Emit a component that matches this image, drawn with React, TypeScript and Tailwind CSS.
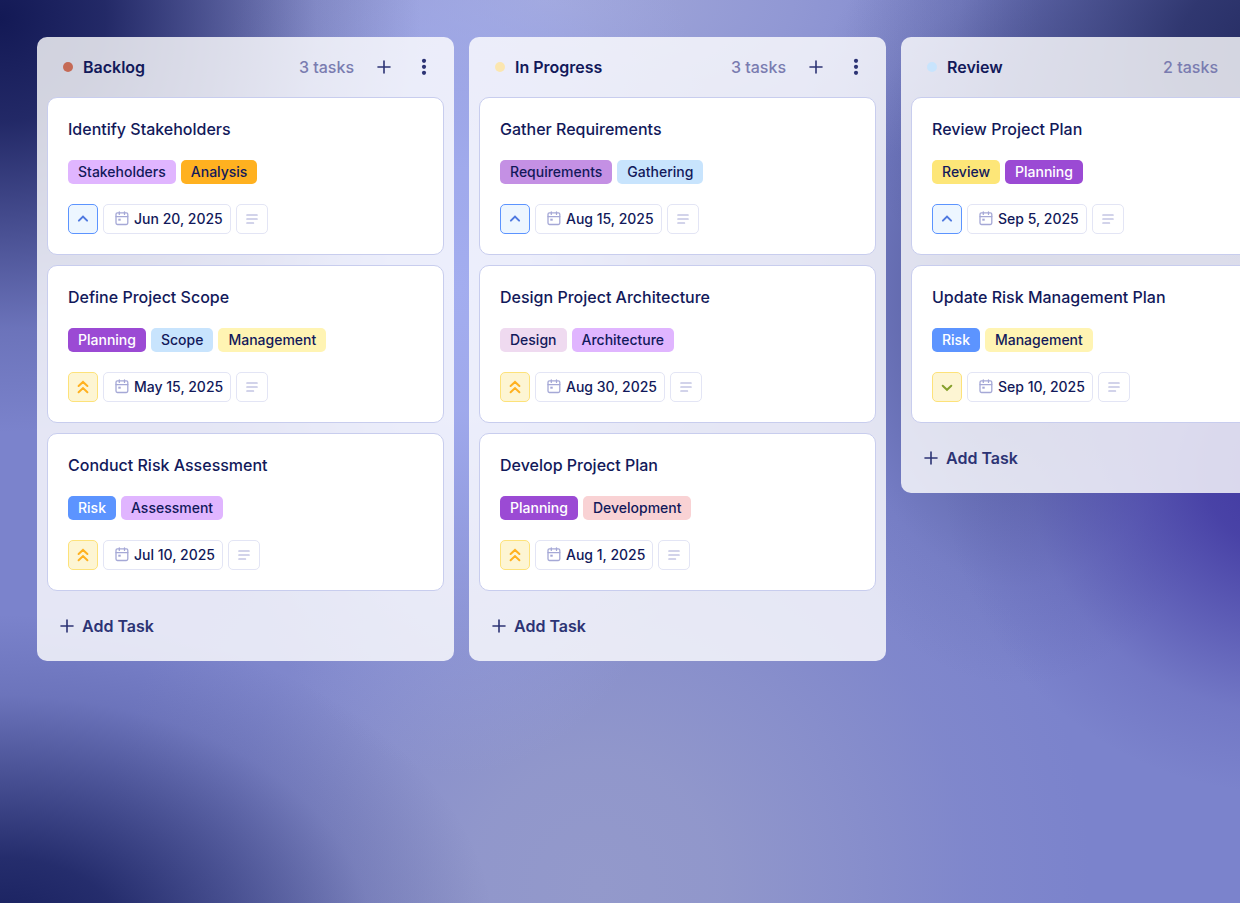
import React from 'react';

type Priority = 'medium' | 'high' | 'low';

type Tag = {
  name: string;
  color: string;
};

type Task = {
  title: string;
  tags: Tag[];
  priority: Priority;
  date: string;
};

type Column = {
  name: string;
  dot: string;
  tasks: Task[];
};

const tag = {
  stakeholders: { name: "Stakeholders", color: "bg-[#e0b5ff]" },
  analysis: { name: "Analysis", color: "bg-[#ffb120]" },
  planning: { name: "Planning", color: "bg-[#9b4ad4] text-white" },
  scope: { name: "Scope", color: "bg-[#c8e4fd]" },
  management: { name: "Management", color: "bg-[#fff4b3]" },
  risk: { name: "Risk", color: "bg-[#5c94ff] text-white" },
  assessment: { name: "Assessment", color: "bg-[#e0b5ff]" },
  requirements: { name: "Requirements", color: "bg-[#c490e4]" },
  gathering: { name: "Gathering", color: "bg-[#c8e4fd]" },
  design: { name: "Design", color: "bg-[#efdaf0]" },
  architecture: { name: "Architecture", color: "bg-[#e0b5ff]" },
  development: { name: "Development", color: "bg-[#f9d2d4]" },
  review: { name: "Review", color: "bg-[#fde678]" },
};

const columns: Column[] = [
  {
    name: "Backlog",
    dot: "bg-[#c56a56]",
    tasks: [
      { title: "Identify Stakeholders", tags: [tag.stakeholders, tag.analysis], priority: "medium", date: "Jun 20, 2025" },
      { title: "Define Project Scope", tags: [tag.planning, tag.scope, tag.management], priority: "high", date: "May 15, 2025" },
      { title: "Conduct Risk Assessment", tags: [tag.risk, tag.assessment], priority: "high", date: "Jul 10, 2025" },
    ],
  },
  {
    name: "In Progress",
    dot: "bg-[#fbe6b0]",
    tasks: [
      { title: "Gather Requirements", tags: [tag.requirements, tag.gathering], priority: "medium", date: "Aug 15, 2025" },
      { title: "Design Project Architecture", tags: [tag.design, tag.architecture], priority: "high", date: "Aug 30, 2025" },
      { title: "Develop Project Plan", tags: [tag.planning, tag.development], priority: "high", date: "Aug 1, 2025" },
    ],
  },
  {
    name: "Review",
    dot: "bg-[#c8e4fd]",
    tasks: [
      { title: "Review Project Plan", tags: [tag.review, tag.planning], priority: "medium", date: "Sep 5, 2025" },
      { title: "Update Risk Management Plan", tags: [tag.risk, tag.management], priority: "low", date: "Sep 10, 2025" },
    ],
  },
];

const priorities = {
  medium: { label: "Medium priority", box: "border-[#5c94ff] bg-[#edf6ff] text-[#4f79e0]", path: "M2.9 8.6 7 4.6l4.1 4" },
  high: { label: "High priority", box: "border-[#fde27a] bg-[#fdf5d3] text-[#ffb120]", path: "M2.6 6 7 1.9 11.4 6M2.6 12.2 7 8.1l4.4 4.1" },
  low: { label: "Low priority", box: "border-[#fde27a] bg-[#fdf5d3] text-[#86a02c]", path: "M2.7 5.8 7 9.8l4.3-4" },
};

const PlusIcon = () => (
  <svg className="size-4" viewBox="0 0 16 16" fill="none" stroke="currentColor" strokeWidth="1.6" strokeLinecap="round" aria-hidden="true">
    <path d="M8 2v12M2 8h12" />
  </svg>
);

const DotsIcon = () => (
  <svg className="size-[18px]" viewBox="0 0 18 18" fill="currentColor" aria-hidden="true">
    <circle cx="9" cy="2.8" r="2.1" />
    <circle cx="9" cy="8.8" r="2.1" />
    <circle cx="9" cy="14.8" r="2.1" />
  </svg>
);

const CalendarIcon = () => (
  <svg className="h-4 w-[14px] text-[#a5a8d6]" viewBox="0 0 14 16" fill="none" stroke="currentColor" strokeWidth="1.3" strokeLinecap="round" aria-hidden="true">
    <rect x="1" y="1.9" width="11.8" height="11.6" rx="1.4" />
    <path d="M1 5.6h11.8M4.3.8v2.6M9.5.8v2.6" />
    <rect x="3.3" y="7.7" width="2.4" height="2" fill="currentColor" stroke="none" />
  </svg>
);

const LinesIcon = () => (
  <svg className="h-[10px] w-3" viewBox="0 0 12 10" fill="none" stroke="currentColor" strokeWidth="1.2" strokeLinecap="round" aria-hidden="true">
    <path d="M.8 1h10.4M.8 5h10.4M.8 9h6.8" />
  </svg>
);

const TaskCard = ({ task }: { task: Task }) => {
  const priority = priorities[task.priority];

  return (
    <article className="rounded-[10px] border border-[#c8cdee] bg-white p-5">
      <h3 className="text-base leading-[22px] font-medium">{task.title}</h3>

      {/* Tags */}
      <ul className="mt-5 flex gap-[5px]">
        {task.tags.map((item) => (
          <li key={item.name} className={`h-6 rounded-[5px] px-[10px] text-sm leading-6 font-medium ${item.color}`}>
            {item.name}
          </li>
        ))}
      </ul>

      {/* Priority, due date, description */}
      <div className="mt-5 flex gap-[5px]">
        <button type="button" aria-label={priority.label} className={`flex size-[30px] items-center justify-center rounded-[5px] border ${priority.box}`}>
          <svg className="size-[14px]" viewBox="0 0 14 14" fill="none" stroke="currentColor" strokeWidth="2" strokeLinecap="round" aria-hidden="true">
            <path d={priority.path} />
          </svg>
        </button>
        <button type="button" className="flex h-[30px] items-center gap-[5px] rounded-[5px] border border-[#e3e5f5] pr-[7px] pl-[11px] text-sm font-medium whitespace-nowrap">
          <CalendarIcon />
          {task.date}
        </button>
        <button type="button" aria-label="Description" className="flex h-[30px] w-8 items-center justify-center rounded-[5px] border border-[#e3e5f5] text-[#a5a8d6]">
          <LinesIcon />
        </button>
      </div>
    </article>
  );
};

const BoardColumn = ({ column }: { column: Column }) => (
  <section className="w-[417px] shrink-0 rounded-[10px] bg-white/80 px-[10px] pb-[15px]">
    <header className="flex h-[60px] items-center pr-[5px] pl-4 text-base">
      <span className={`size-[10px] rounded-full ${column.dot}`} />
      <h2 className="ml-[10px] font-semibold">{column.name}</h2>
      <span className="ml-auto font-medium text-[#7a7cb0]">{column.tasks.length} tasks</span>
      <button type="button" aria-label="Add task" className="ml-[15px] flex size-[30px] items-center justify-center text-[#2c3374]">
        <PlusIcon />
      </button>
      <button type="button" aria-label="Column menu" className="ml-[10px] flex size-[30px] items-center justify-center text-[#2c3374]">
        <DotsIcon />
      </button>
    </header>

    <div className="flex flex-col gap-[10px]">
      {column.tasks.map((task) => (
        <TaskCard key={task.title} task={task} />
      ))}
    </div>

    <button type="button" className="mt-[15px] flex h-10 items-center gap-[7px] px-3 text-base font-semibold text-[#2c3374]">
      <PlusIcon />
      Add Task
    </button>
  </section>
);

const App = () => {
  return (
    <main className="min-h-screen bg-[#7b83cc] bg-[radial-gradient(ellipse_34%_46%_at_0%_2%,#131955_0%,#131955d9_25%,#13195580_50%,#13195526_75%,#13195500_100%),radial-gradient(ellipse_40%_36%_at_0%_104%,#161e5c_0%,#161e5cd9_25%,#161e5c80_50%,#161e5c26_75%,#161e5c00_100%),radial-gradient(ellipse_36%_40%_at_104%_6%,#232a60_0%,#232a60d9_25%,#232a6080_50%,#232a6026_75%,#232a6000_100%),radial-gradient(ellipse_28%_36%_at_104%_52%,#4037a0_0%,#4037a0d9_25%,#4037a080_50%,#4037a026_75%,#4037a000_100%),radial-gradient(ellipse_20%_44%_at_82%_32%,#404784b3_0%,#40478499_25%,#40478459_50%,#4047841a_75%,#40478400_100%),radial-gradient(ellipse_22%_54%_at_37%_32%,#a3adef_0%,#a3adefe6_25%,#a3adef90_50%,#a3adef30_75%,#a3adef00_100%),radial-gradient(ellipse_40%_56%_at_48%_98%,#9399cb_0%,#9399cbe6_25%,#9399cb90_50%,#9399cb30_75%,#9399cb00_100%),radial-gradient(ellipse_40%_24%_at_44%_0%,#a2a8da_0%,#a2a8da90_50%,#a2a8da00_100%)] font-['Inter',sans-serif] text-[#12195a]">
      <div className="flex items-start gap-[15px] overflow-x-auto px-[37px] py-[37px] [scrollbar-width:none]">
        {columns.map((column) => (
          <BoardColumn key={column.name} column={column} />
        ))}
      </div>
    </main>
  );
};

export default App;
